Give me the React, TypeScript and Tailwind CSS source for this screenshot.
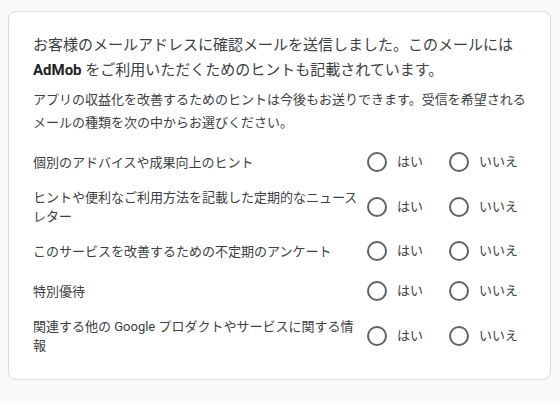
import { useState } from "react";

const topics = [
  "個別のアドバイスや成果向上のヒント",
  "ヒントや便利なご利用方法を記載した定期的なニュースレター",
  "このサービスを改善するための不定期のアンケート",
  "特別優待",
  "関連する他の Google プロダクトやサービスに関する情報",
];

type Choice = "yes" | "no" | null;

function Radio({
  checked,
  label,
  onSelect,
}: {
  checked: boolean;
  label: string;
  onSelect: () => void;
}) {
  return (
    <label className="flex items-center cursor-pointer">
      <span className="w-7 h-10 flex items-center justify-center">
        <button
          type="button"
          role="radio"
          aria-checked={checked}
          onClick={onSelect}
          className="w-5 h-5 rounded-full border-2 border-[#5f6368] flex items-center justify-center"
        >
          {checked && <span className="w-2.5 h-2.5 rounded-full bg-[#1a73e8]" />}
        </button>
      </span>
      <span className="ml-1.5 text-[13px] leading-5 text-[#3c4043]">{label}</span>
    </label>
  );
}

export default function App() {
  const [choices, setChoices] = useState<Choice[]>(topics.map(() => null));

  const pick = (i: number, c: Choice) =>
    setChoices((prev) => prev.map((v, j) => (j === i ? c : v)));

  return (
    <div
      className="min-h-[401px] bg-[#f8f9fa] pt-[11px] pl-2 pr-[9px] pb-5"
      style={{ fontFamily: 'Roboto, "Noto Sans CJK JP", sans-serif' }}
    >
      <section className="rounded-lg border border-[#dadce0] bg-white pl-6 pr-4 pt-[21px] pb-[19px]">
        <p className="text-[15px] leading-[25px] text-[#3c4043]">
          お客様のメールアドレスに確認メールを送信しました。このメールには
          <br />
          <b className="font-bold text-[#202124]">AdMob</b>{" "}
          をご利用いただくためのヒントも記載されています。
        </p>
        <p className="mt-[5px] text-[13px] leading-[23px] text-[#3c4043]">
          アプリの収益化を改善するためのヒントは今後もお送りできます。受信を希望される
          <br />
          メールの種類を次の中からお選びください。
        </p>
        <div className="mt-2 flex flex-col">
          {topics.map((t, i) => (
            <div key={t} className="flex items-center min-h-10">
              <div className="w-[330px] py-[5.5px] text-[13px] leading-[19px] text-[#3c4043]">
                {t}
              </div>
              <div className="flex items-center gap-[22px]">
                <Radio
                  checked={choices[i] === "yes"}
                  label="はい"
                  onSelect={() => pick(i, "yes")}
                />
                <Radio
                  checked={choices[i] === "no"}
                  label="いいえ"
                  onSelect={() => pick(i, "no")}
                />
              </div>
            </div>
          ))}
        </div>
      </section>
    </div>
  );
}
